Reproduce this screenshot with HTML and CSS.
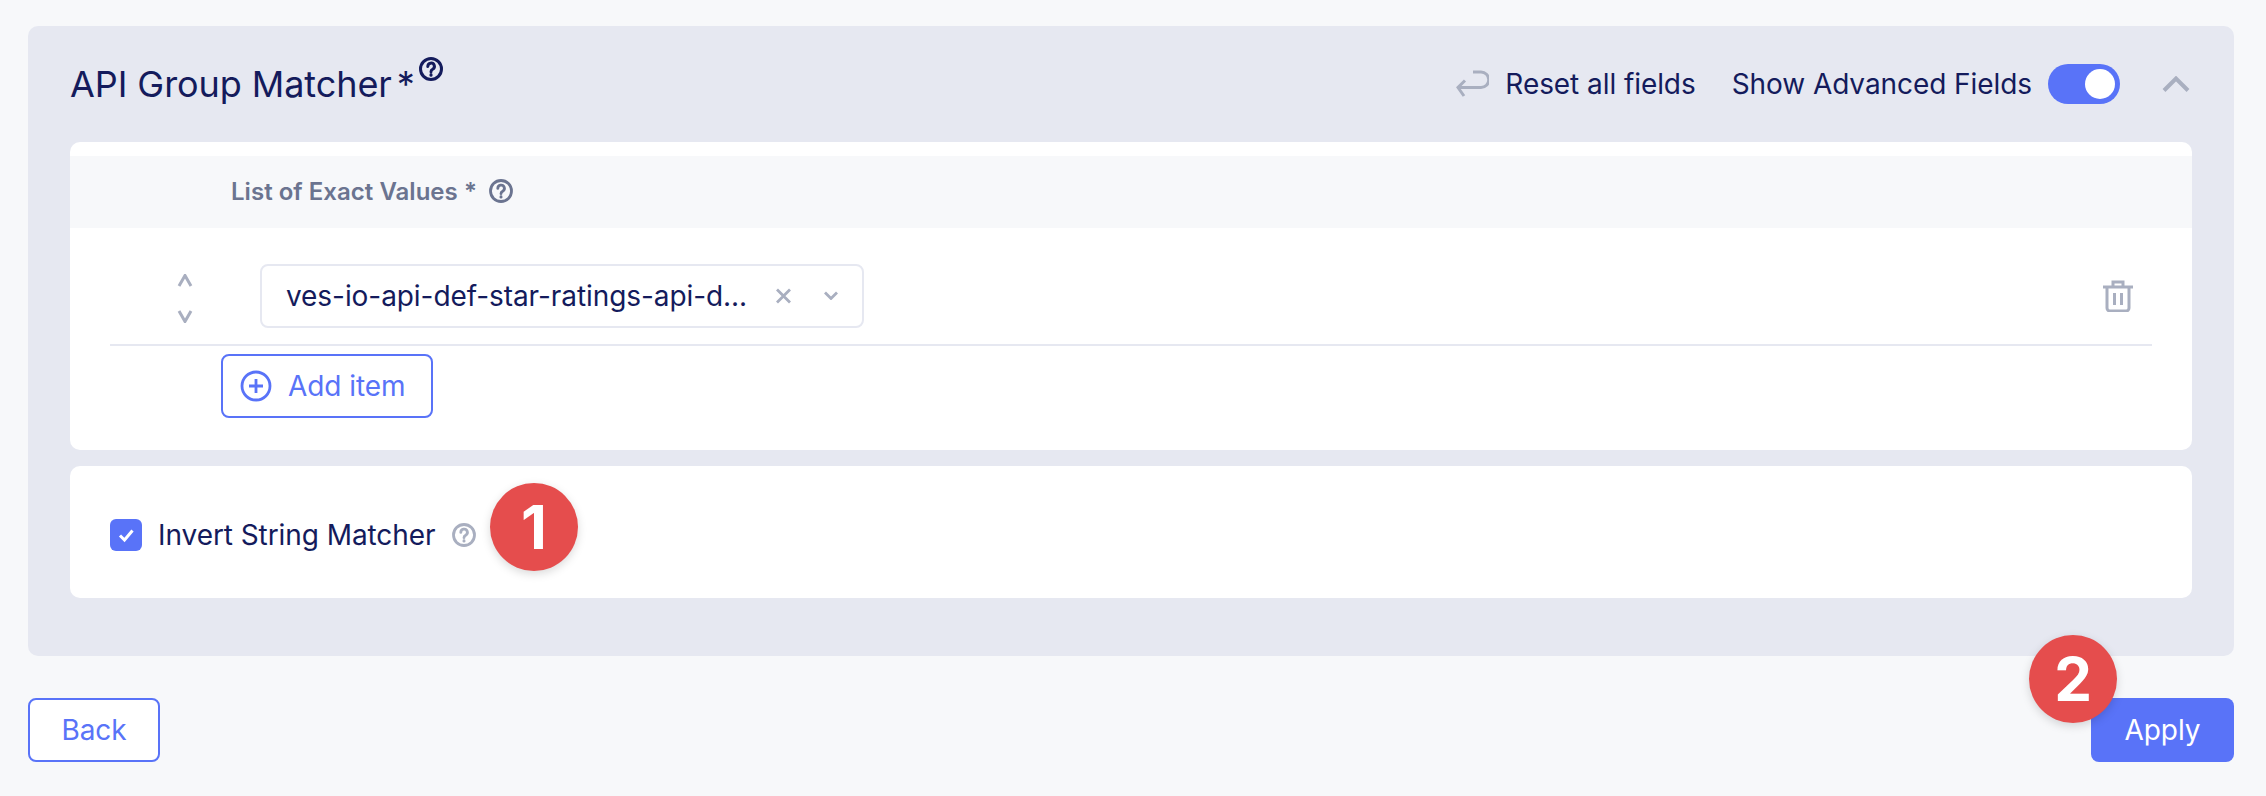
FILE: index.html
```html
<!DOCTYPE html>
<html lang="en">
<head>
    <meta charset="UTF-8">
    <meta name="viewport" content="width=device-width, initial-scale=1.0">
    <title>API Group Matcher</title>
    <link rel="stylesheet" href="styles.css">
</head>
<body>
    <div class="page">
        <section class="panel">
            <!-- panel header -->
            <div class="panel-head">
                <div class="panel-title">
                    <h2>API Group Matcher</h2>
                    <span class="title-star">*</span>
                    <svg class="help help-title" viewBox="0 0 24 24">
                        <circle cx="12" cy="12" r="10.5"/>
                        <path d="M8.8 9.4a3.3 3.3 0 1 1 4.9 2.9c-1.1.6-1.7 1.2-1.7 2.4"/>
                        <path d="M12 17.6v.6"/>
                    </svg>
                </div>
                <div class="panel-actions">
                    <div class="reset">
                        <svg class="reset-icon" viewBox="0 0 33 28">
                            <path d="M17 2h8a6.500 6.500 0 0 1 0 15.500H2"/>
                            <path d="M9 10.500l-7 7 6 8.500"/>
                        </svg>
                        <span>Reset all fields</span>
                    </div>
                    <div class="advanced">
                        <span>Show Advanced Fields</span>
                        <div class="toggle"><div class="toggle-knob"></div></div>
                    </div>
                    <svg class="collapse" viewBox="0 0 28 16">
                        <path d="M2 14.500L14 2.500l12 12"/>
                    </svg>
                </div>
            </div>

            <!-- list of values -->
            <div class="card list-card">
                <div class="list-head">
                    <span>List of Exact Values *</span>
                    <svg class="help help-list" viewBox="0 0 24 24">
                        <circle cx="12" cy="12" r="10.5"/>
                        <path d="M8.8 9.400a3.300 3.300 0 1 1 4.900 2.900c-1.100.6-1.700 1.200-1.700 2.400"/>
                        <path d="M12 17.600v.6"/>
                    </svg>
                </div>
                <div class="list-row">
                    <div class="sorter">
                        <svg viewBox="0 0 16 13"><path d="M2 12L8 1.500 14 12"/></svg>
                        <svg viewBox="0 0 16 13"><path d="M2 1l6 10.500L14 1"/></svg>
                    </div>
                    <div class="select">
                        <span class="select-value">ves-io-api-def-star-ratings-api-d...</span>
                        <svg class="select-clear" viewBox="0 0 17 16"><path d="M2 1.500l13 13M15 1.500l-13 13"/></svg>
                        <svg class="select-arrow" viewBox="0 0 16 9"><path d="M2 1.500l6 6 6-6"/></svg>
                    </div>
                    <svg class="trash" viewBox="0 0 32 32">
                        <path d="M1 7h30"/>
                        <path d="M11 7V2h10v5"/>
                        <path d="M5 7v21a3 3 0 0 0 3 3h16a3 3 0 0 0 3-3V7"/>
                        <path d="M12.500 13v12M19.500 13v12"/>
                    </svg>
                </div>
                <button type="button" class="add-btn">
                    <svg viewBox="0 0 32 32">
                        <circle cx="16" cy="16" r="14"/>
                        <path d="M16 9v14M9 16h14"/>
                    </svg>
                    Add item
                </button>
            </div>

            <!-- invert option -->
            <div class="card invert-card">
                <div class="checkbox">
                    <svg viewBox="0 0 32 32"><path d="M10 16.500l4.500 4.500 8-9.500"/></svg>
                </div>
                <span class="invert-label">Invert String Matcher</span>
                <svg class="help help-invert" viewBox="0 0 24 24">
                    <circle cx="12" cy="12" r="10.500"/>
                    <path d="M8.800 9.400a3.300 3.300 0 1 1 4.900 2.900c-1.100.6-1.700 1.200-1.700 2.400"/>
                    <path d="M12 17.600v.6"/>
                </svg>
                <div class="badge badge-one">1</div>
            </div>
        </section>

        <div class="footer">
            <button type="button" class="btn btn-back">Back</button>
            <button type="button" class="btn btn-apply">Apply</button>
            <div class="badge badge-two">2</div>
        </div>
    </div>
</body>
</html>
```

FILE: styles.css
```css
* {
    box-sizing: border-box;
}

body {
    margin: 0;
    background-color: #f7f8fa;
    color: #141b5c;
    font-family: Inter, "Liberation Sans", sans-serif;
    font-size: 28px;
    letter-spacing: -0.07px;
}

svg {
    display: block;
    fill: none;
}

.page {
    padding: 26px 32px 34px 28px;
}

/* panel */
.panel {
    height: 630px;
    padding: 0 42px;
    background-color: #e6e8f1;
    border-radius: 10px;
}

.panel-head {
    display: flex;
    align-items: center;
    justify-content: space-between;
    height: 116px;
}

.panel-title {
    display: flex;
    align-items: flex-start;
}

.panel-title h2 {
    margin: 0;
    font-size: 36px;
    font-weight: 400;
    line-height: 44px;
}

.title-star {
    margin-left: 5px;
    font-size: 36px;
    line-height: 44px;
}

.help {
    width: 24px;
    height: 24px;
    stroke-width: 2.4;
    stroke-linecap: round;
}

.help-title {
    margin: -5px 0 0 4px;
    stroke: #141b5c;
    stroke-width: 3;
}

.help-list {
    margin-left: 12px;
    stroke: #6b7490;
    stroke-width: 2.800;
}

.help-invert {
    margin-left: 16px;
    stroke: #a9afc0;
    stroke-width: 2.800;
}

.panel-actions {
    display: flex;
    align-items: center;
}

.reset {
    display: flex;
    align-items: center;
    gap: 16px;
    margin-right: 36px;
}

.reset-icon {
    width: 33px;
    height: 28px;
    stroke: #a9afc0;
    stroke-width: 3;
}

.advanced {
    display: flex;
    align-items: center;
    gap: 16px;
    margin-right: 42px;
}

.toggle {
    display: flex;
    align-items: center;
    justify-content: flex-end;
    width: 72px;
    height: 40px;
    padding-right: 5px;
    background-color: #5973f8;
    border-radius: 20px;
}

.toggle-knob {
    width: 30px;
    height: 30px;
    background-color: #fff;
    border-radius: 50%;
}

.collapse {
    width: 28px;
    height: 16px;
    margin-right: 2px;
    stroke: #a9afc0;
    stroke-width: 4;
}

/* cards */
.card {
    background-color: #fff;
    border-radius: 10px;
}

.list-card {
    height: 308px;
    padding-top: 14px;
}

.list-head {
    display: flex;
    align-items: center;
    height: 72px;
    padding: 0 0 2px 161px;
    background-color: #f7f8fa;
    color: #6b7490;
    font-size: 24px;
    font-weight: 600;
    letter-spacing: 0.03px;
}

.list-row {
    display: flex;
    align-items: center;
    height: 118px;
    margin: 0 40px;
    padding: 0 18px 0 67px;
    border-bottom: 2px solid #e6e8f1;
}

.sorter {
    display: flex;
    flex-direction: column;
    gap: 23px;
    width: 16px;
    margin-top: 24px;
    stroke: #a9afc0;
    stroke-width: 3;
}

.sorter svg {
    width: 16px;
    height: 13px;
}

.select {
    display: flex;
    align-items: center;
    width: 604px;
    height: 64px;
    margin: 19px 0 0 67px;
    padding-left: 24px;
    border: 2px solid #e6e8f1;
    border-radius: 8px;
    stroke: #a9afc0;
}

.select-value {
    width: 464px;
    white-space: nowrap;
}

.select-clear {
    width: 17px;
    height: 16px;
    margin-left: 25px;
    stroke-width: 2.800;
}

.select-arrow {
    width: 16px;
    height: 9px;
    margin-left: 31px;
    stroke-width: 2.800;
}

.trash {
    width: 32px;
    height: 32px;
    margin: 19px 0 0 auto;
    stroke: #a9afc0;
    stroke-width: 3;
}

.add-btn {
    display: flex;
    align-items: center;
    gap: 16px;
    width: 212px;
    height: 64px;
    margin: 8px 0 0 151px;
    padding: 0 0 0 17px;
    background-color: #fff;
    border: 2px solid #5973f8;
    border-radius: 8px;
    color: #5973f8;
    font: inherit;
    letter-spacing: inherit;
}

.add-btn svg {
    width: 32px;
    height: 32px;
    stroke: #5973f8;
    stroke-width: 2.800;
}

.invert-card {
    position: relative;
    display: flex;
    align-items: center;
    height: 132px;
    margin-top: 16px;
    padding: 6px 0 0 40px;
}

.checkbox {
    width: 32px;
    height: 32px;
    background-color: #5973f8;
    border-radius: 6px;
    stroke: #fff;
    stroke-width: 3;
}

.invert-label {
    margin-left: 16px;
}

/* numbered markers */
.badge {
    position: absolute;
    display: flex;
    align-items: center;
    justify-content: center;
    width: 88px;
    height: 88px;
    background-color: #e54d4d;
    border-radius: 50%;
    box-shadow: 0 3px 10px rgba(0, 0, 0, 0.15);
    color: #fff;
    font-size: 60px;
    font-weight: 700;
}

.badge-one {
    top: 17px;
    left: 420px;
}

.badge-two {
    top: -63px;
    right: 117px;
}

/* bottom buttons */
.footer {
    position: relative;
    display: flex;
    justify-content: space-between;
    margin-top: 42px;
}

.btn {
    height: 64px;
    border-radius: 8px;
    font: inherit;
    letter-spacing: inherit;
}

.btn-back {
    width: 132px;
    background-color: #fff;
    border: 2px solid #5973f8;
    color: #5973f8;
}

.btn-apply {
    width: 143px;
    background-color: #5973f8;
    border: none;
    color: #fff;
}
```
